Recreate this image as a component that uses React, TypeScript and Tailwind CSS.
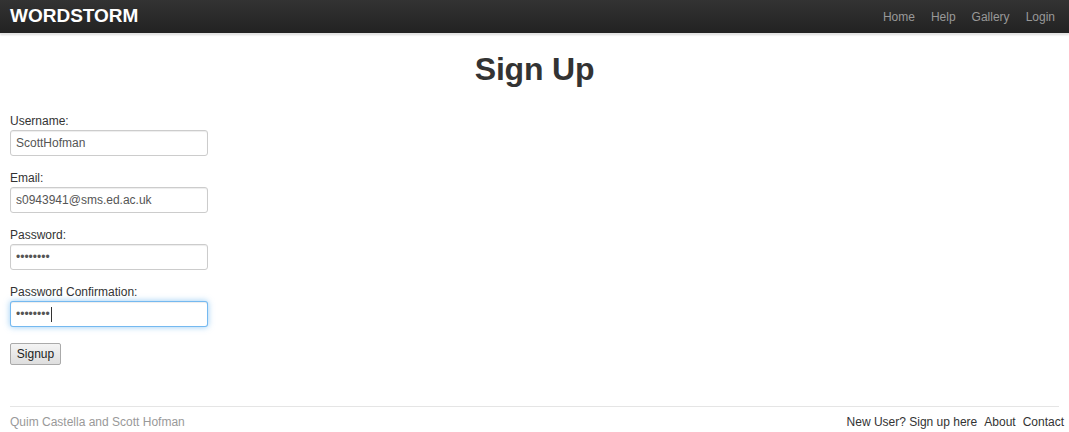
import React from "react";

const font = { fontFamily: '"Liberation Sans", Arial, Helvetica, sans-serif' };

function Field({ label, value, type = "text", focused = false }: { label: string; value: string; type?: string; focused?: boolean }) {
  return (
    <div className="mb-[13px]">
      <label className="block h-[18px] text-[12px] leading-[18px] text-[#333]">{label}</label>
      <div className="relative w-[198px]">
        <input
          readOnly
          type={type}
          value={value}
          className={
            "block h-[26px] w-[198px] rounded-[3px] border bg-white px-[5px] text-[12px] text-[#555] outline-none " +
            (focused
              ? "border-[rgba(82,168,236,0.8)] shadow-[inset_0_1px_1px_rgba(0,0,0,0.075),0_0_6px_rgba(82,168,236,0.6)]"
              : "border-[#ccc] shadow-[inset_0_1px_1px_rgba(0,0,0,0.075)]")
          }
          style={font}
        />
        {focused && <span className="absolute left-[41px] top-[6px] h-[15px] w-px bg-[#333]" />}
      </div>
    </div>
  );
}

export default function App() {
  return (
    <div className="min-h-[432px] bg-white" style={font}>
      <div className="flex h-[34px] items-center justify-between border-b border-[#e3e3e3] bg-gradient-to-b from-[#333] to-[#222] pl-[10px] pr-[14px] shadow-[0_1px_2px_rgba(0,0,0,0.15)]">
        <span className="text-[19px] font-bold text-white">WORDSTORM</span>
        <nav className="flex gap-[16px] text-[12px] text-[#999]">
          <span>Home</span>
          <span>Help</span>
          <span>Gallery</span>
          <span>Login</span>
        </nav>
      </div>
      <div className="px-[10px]">
        <h1 className="mt-[15px] text-center text-[32px] font-bold leading-[40px] tracking-[-0.2px] text-[#333]">Sign Up</h1>
        <div className="mt-[23px]">
          <Field label="Username:" value="ScottHofman" />
          <Field label="Email:" value="s0943941@sms.ed.ac.uk" />
          <Field label="Password:" value="12345678" type="password" />
          <Field label="Password Confirmation:" value="12345678" type="password" focused />
          <button
            className="mt-[3px] h-[22px] w-[51px] rounded-[2px] border border-[#aaa] bg-gradient-to-b from-[#f4f4f4] to-[#dedede] text-[12px] text-[#222]"
            style={font}
          >
            Signup
          </button>
        </div>
        <div className="mt-[41px] flex items-center justify-between border-t border-[#e5e5e5] pt-[6px] pb-[6px] text-[12px] leading-[18px]">
          <span className="text-[#999]">Quim Castella and Scott Hofman</span>
          <div className="mr-[-5px] flex gap-[7px] text-[#333]">
            <span>New User? Sign up here</span>
            <span>About</span>
            <span>Contact</span>
          </div>
        </div>
      </div>
    </div>
  );
}
